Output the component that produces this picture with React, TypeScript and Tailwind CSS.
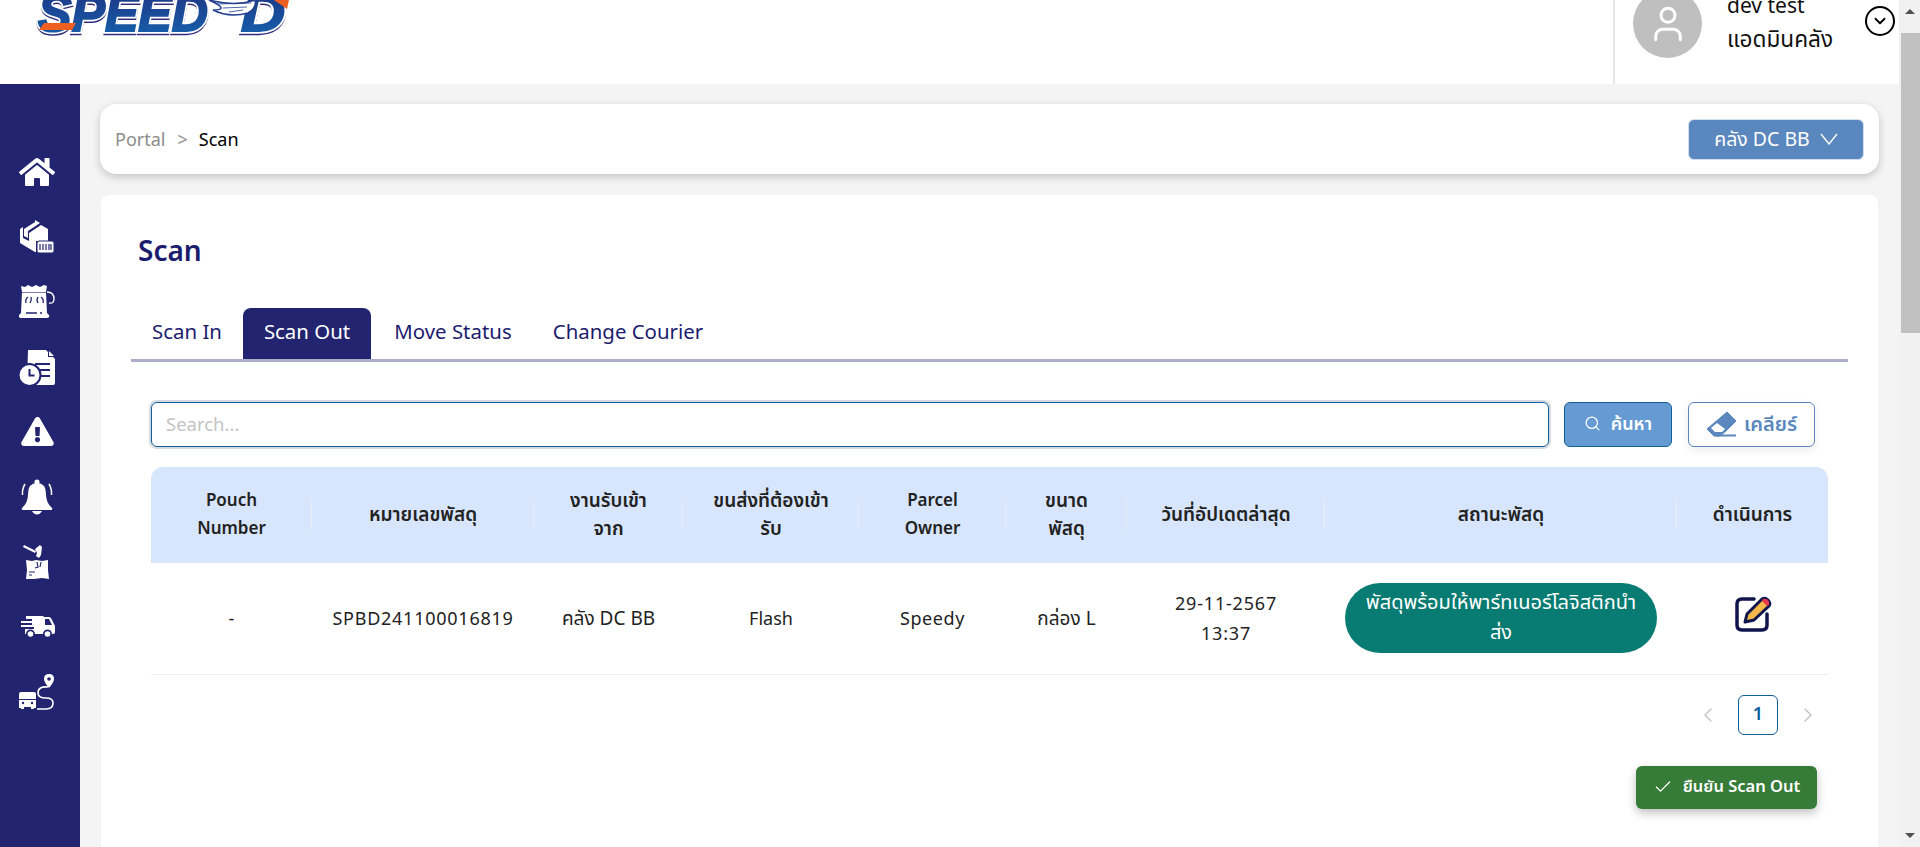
import React from 'react';
import { ChevronDown, ChevronLeft, ChevronRight, Check, Search, User } from 'lucide-react';
import { FaHome, FaExclamationTriangle } from 'react-icons/fa';

const FONT = "font-['Noto_Sans','Noto_Sans_Thai','Noto_Sans_CJK_SC',sans-serif]";

const LogoWord = ({ x, length, children }: { x: number; length: number; children: string }) => (
  <g fontFamily="Liberation Sans" fontWeight="700" fontStyle="italic" fontSize="52">
    <text x={x} y="36" textLength={length} lengthAdjust="spacingAndGlyphs" fill="#2c2a7a" stroke="#2c2a7a" strokeWidth="4.500">{children}</text>
    <text x={x} y="34" textLength={length} lengthAdjust="spacingAndGlyphs" fill="#fff" stroke="#fff" strokeWidth="5.500">{children}</text>
    <text x={x} y="34" textLength={length} lengthAdjust="spacingAndGlyphs" fill="url(#logoBlue)" stroke="url(#logoBlue)" strokeWidth="2">{children}</text>
  </g>
);

const Logo = () => (
  <svg width="262" height="42" viewBox="0 0 262 42" className="mt-[-3px] ml-[31px]">
    <defs>
      <linearGradient id="logoBlue" x1="0" y1="0" x2="0" y2="1">
        <stop offset="0" stopColor="#1f2f7f" />
        <stop offset="1" stopColor="#1565b0" />
      </linearGradient>
    </defs>
    <LogoWord x={7} length={170}>SPEED</LogoWord>
    <path d="M8 33 L13 26 L45 26 L41 33Z" fill="#ee5f22" />
    <LogoWord x={210} length={44}>D</LogoWord>
    <path d="M178 3 Q205 10 224 3 Q226 11 217 16 Q198 21 182 13 Q200 13 178 3Z" fill="#fff" stroke="#24408f" strokeWidth="1.5" />
    <path d="M186 7 L220 6 M192 11 L216 10 M198 15 L212 13" stroke="#24408f" strokeWidth="0.8" fill="none" />
    <path d="M243 3 L258 3 L256 12Z" fill="#ee5f22" />
  </svg>
);

const BoxScanIcon = () => (
  <svg viewBox="0 0 36 34" className="w-[36px] h-[34px]" fill="#fff">
    <path d="M16 0 L21 3 L9 11 L9 18 L5 16 L5 9 L16 2Z" />
    <path d="M1 9 L4 7 L4 18 L10 21 L10 13 L22 5 L29 9 L29 21 L17 21 L17 32 L16 32 L1 23Z" />
    <rect x="18" y="21" width="17" height="12" rx="2" fill="#fff" stroke="#22246f" strokeWidth="1" />
    <path d="M21 24v6M24 24v6M27 24v6M30 24v6M32 24v6" stroke="#22246f" strokeWidth="1.2" />
  </svg>
);

const PouchIcon = () => (
  <svg viewBox="0 0 36 34" className="w-[36px] h-[34px]" fill="#fff">
    <path d="M2 1 L6 2 L9 0 L13 2 L17 0 L21 2 L25 0 L28 1 L27 7 L28 28 L30 30 Q31 33 28 33 L2 33 Q-1 33 0 30 L2 28 L3 7Z" />
    <path d="M3 7.500h24" stroke="#22246f" strokeWidth="0.6" />
    <path d="M9 12 Q6 14 7 18 M12 12 Q13 15 11 18 M19 12 Q17 15 19 18 M22 12 Q25 14 24 18" stroke="#22246f" strokeWidth="1.3" fill="none" />
    <path d="M7 28h11M21 28h2" stroke="#22246f" strokeWidth="1.4" />
    <path d="M28 7 Q35 7 35 14 Q35 19 30 18" fill="none" stroke="#fff" strokeWidth="1.4" />
  </svg>
);

const DocClockIcon = () => (
  <svg viewBox="0 0 36 36" className="w-[36px] h-[36px]" fill="#fff">
    <path d="M9 1 L27 1 L36 10 L36 34 Q36 36 34 36 L9 36 Q8 36 8 35Z" />
    <path d="M29 1 L36 8 L29 8Z" fill="#22246f" />
    <path d="M30 2 L35 7 L30 7Z" fill="#fff" />
    <path d="M16 15h15M20 21h11M20 27h11" stroke="#22246f" strokeWidth="2" />
    <circle cx="10.5" cy="26" r="11" stroke="#22246f" strokeWidth="2" />
    <path d="M10.5 20v6.5h5" fill="none" stroke="#22246f" strokeWidth="2" />
  </svg>
);

const BellIcon = () => (
  <svg viewBox="0 0 32 36" className="w-[32px] h-[36px]" fill="#fff">
    <circle cx="16" cy="3" r="2.6" />
    <path d="M16 4 Q25 4 25 15 Q25 24 31 29 Q32 31 30 31 L2 31 Q0 31 1 29 Q7 24 7 15 Q7 4 16 4Z" />
    <path d="M11 32 L21 32 Q19 35.500 16 35.500 Q13 35.500 11 32Z" />
    <path d="M4 5 Q1 10 1.500 16 M28 5 Q31 10 30.500 16" fill="none" stroke="#fff" strokeWidth="1.5" />
  </svg>
);

const HammerBoxIcon = () => (
  <svg viewBox="0 0 30 36" className="w-[30px] h-[36px]" fill="#fff">
    <path d="M2 1 L14 7 L13 9 L1 3Z" />
    <path d="M13 5 L18 1 L20 3 L19 11 L17 14 L14 12 L15 9Z" />
    <path d="M4 16 L10 17 L14 16 L20 17 L26 16 L26 26 L27 35 L20 34 L12 35 L4 35 L5 26Z" />
    <path d="M15 18l1 5-3 1M19 18l-1 5" fill="none" stroke="#22246f" strokeWidth="1.2" />
    <path d="M7 28h6M7 31h3" stroke="#22246f" strokeWidth="1" />
  </svg>
);

const VanIcon = () => (
  <svg viewBox="0 0 35 21" className="w-[35px] h-[21px]" fill="#fff">
    <path d="M6 0 L23 0 L24 1 L29 1 Q31 1 32 4 L34 8 Q35 9 35 11 L35 16 Q35 18 33 18 L32 18 A4.500 4.500 0 0 0 23 18 L15 18 A4.500 4.500 0 0 0 6 18 L5 18 L5 13 L14 13 L14 11 L1 11 L1 9 L12 9 L12 7 L1 7 L1 5 L12 5 L12 3 L6 3Z" />
    <path d="M25 3 L29 3 L32 9 L25 9Z" fill="#22246f" />
    <circle cx="10.500" cy="18" r="2.800" />
    <circle cx="27.500" cy="18" r="2.800" />
  </svg>
);

const RouteIcon = () => (
  <svg viewBox="0 0 36 36" className="w-[36px] h-[36px]" fill="#fff">
    <path d="M30 0 Q35 0 35 5 Q35 8 30 14 Q25 8 25 5 Q25 0 30 0Z" />
    <circle cx="30" cy="5" r="1.800" fill="#22246f" />
    <path d="M29 13 Q19 12 19 19 Q19 24 27 24 Q34 24 34 29 Q34 35 27 35 L18 35" fill="none" stroke="#fff" strokeWidth="1.6" />
    <path d="M2 18 L15 18 Q17 18 17 20 L17 25 L0 25 L0 20 Q0 18 2 18Z" />
    <path d="M0 26 L17 26 L17 34 L15 34 L15 35 L12 35 L12 33 L5 33 L5 35 L2 35 L2 34 L0 34Z" />
    <circle cx="4" cy="29" r="1.200" fill="#22246f" />
    <circle cx="13" cy="29" r="1.200" fill="#22246f" />
  </svg>
);

const EraserIcon = () => (
  <svg viewBox="0 0 31 27" className="h-[27px] w-[31px]">
    <path d="M21 2 L30 11 L20 21 L14 26 L8 26 L1 19Z" fill="#5a87bd" stroke="#5a87bd" strokeLinejoin="round" />
    <path d="M5 18 L11 13 L19 19 L16 22 L9 22Z" fill="#fff" />
    <path d="M10 25.500 L30 25.500" stroke="#5a87bd" strokeWidth="2" />
  </svg>
);

const EditIcon = () => (
  <svg viewBox="0 0 38 38" className="w-[38px] h-[38px]">
    <path d="M20 3 L8 3 Q3 3 3 8 L3 29 Q3 34 8 34 L28 34 Q33 34 33 29 L33 18" fill="none" stroke="#10144d" strokeWidth="3.5" strokeLinecap="round" />
    <path d="M11 26 L13 18 L28 3 Q31 1 34 4 Q37 7 35 10 L20 24Z" fill="#f6b84a" stroke="#10144d" strokeWidth="3" strokeLinejoin="round" />
    <path d="M29 3 Q31 2 34 4 Q36 6 35 9 L33 10 L28 5Z" fill="#e53950" />
  </svg>
);

const sideItems = [
  <FaHome key="home" className="w-[36px] h-[32px] text-white" />,
  <BoxScanIcon key="box" />,
  <PouchIcon key="pouch" />,
  <DocClockIcon key="doc" />,
  <FaExclamationTriangle key="alert" className="w-[33px] h-[29px] text-white" />,
  <BellIcon key="bell" />,
  <HammerBoxIcon key="hammer" />,
  <VanIcon key="truck" />,
  <RouteIcon key="route" />,
];

const columns = [
  { label: ['Pouch', 'Number'], width: 'w-[161px]', size: 'text-[17px]' },
  { label: ['หมายเลขพัสดุ'], width: 'w-[222px]', size: 'text-[19px]' },
  { label: ['งานรับเข้า', 'จาก'], width: 'w-[149px]', size: 'text-[19px]' },
  { label: ['ขนส่งที่ต้องเข้า', 'รับ'], width: 'w-[176px]', size: 'text-[19px]' },
  { label: ['Parcel', 'Owner'], width: 'w-[147px]', size: 'text-[17px]' },
  { label: ['ขนาด', 'พัสดุ'], width: 'w-[121px]', size: 'text-[19px]' },
  { label: ['วันที่อัปเดตล่าสุด'], width: 'w-[198px]', size: 'text-[19px]' },
  { label: ['สถานะพัสดุ'], width: 'w-[352px]', size: 'text-[19px]' },
  { label: ['ดำเนินการ'], width: 'w-[151px]', size: 'text-[19px]' },
];

export default function App() {
  return (
    <div className={`${FONT} flex h-screen w-screen overflow-hidden bg-[#f4f4f4]`}>
      <div className="flex min-w-0 flex-1 flex-col">
        <header className="flex h-[84px] shrink-0 justify-between overflow-hidden bg-white">
          <Logo />
          <div className="flex w-[286px] border-l-2 border-[#e6e6ea]">
            <div className="mt-[-11px] ml-[18px] flex h-[69px] w-[69px] shrink-0 items-center justify-center rounded-full bg-[#bfbfbf]">
              <User className="h-[42px] w-[42px] text-white" strokeWidth={1.7} />
            </div>
            <div className="mt-[-12px] ml-[25px] w-[138px] text-[21px] leading-[34px] text-[#111]">
              <div>dev test</div>
              <div className="text-[22.6px]">แอดมินคลัง</div>
            </div>
            <div className="mt-[6px] flex h-[30px] w-[30px] shrink-0 items-center justify-center rounded-full border-2 border-black">
              <ChevronDown className="h-[18px] w-[18px] text-black" strokeWidth={2.5} />
            </div>
          </div>
        </header>

        <div className="flex min-h-0 flex-1">
          <aside className="flex w-[80px] shrink-0 flex-col items-center bg-[#22246f] pt-[55px] pr-[6px]">
            {sideItems.map((icon, i) => (
              <div key={i} className="flex h-[65px] shrink-0 items-center justify-center">
                {icon}
              </div>
            ))}
          </aside>

          <main className="min-w-0 flex-1 px-[20px] pt-[20px]">
            <div className="flex h-[70px] items-center justify-between rounded-2xl bg-white pr-[15px] pl-[15px] shadow-[0_3px_8px_rgba(0,0,0,0.2)]">
              <div className="flex items-center text-[18px]">
                <span className="text-[#8c8c8c]">Portal</span>
                <span className="mr-[11px] ml-[12px] text-[#8c8c8c]">&gt;</span>
                <span className="text-black">Scan</span>
              </div>
              <button className="flex h-[41px] w-[176px] items-center justify-center gap-[10px] rounded-md border border-[#d5dfec] bg-[#5a87bd] text-[19.5px] text-white">
                คลัง DC BB
                <svg viewBox="0 0 18 12" className="h-[12px] w-[18px]" fill="none" stroke="#fff" strokeWidth="1.4">
                  <path d="M1 1 L9 11 L17 1" />
                </svg>
              </button>
            </div>

            <section className="mt-[21px] ml-[1px] h-[800px] w-[1777px] rounded-lg bg-white px-[30px] pt-[38px]">
              <h1 className="ml-[7px] text-[28px] leading-[34px] font-semibold text-[#1c1c6e]">Scan</h1>

              <div className="mt-[41px] flex h-[54px] items-end border-b-[3px] border-[#aeaecb] text-[20.4px] text-[#1c1c6e]">
                <div className="flex h-[51px] w-[112px] items-center justify-center pb-[4px]">Scan In</div>
                <div className="flex h-[51px] w-[128px] items-center justify-center rounded-t-lg bg-[#22246f] pb-[4px] text-white">Scan Out</div>
                <div className="flex h-[51px] w-[160px] items-center justify-center pb-[4px] pl-[4px]">Move Status</div>
                <div className="flex h-[51px] w-[192px] items-center justify-center pb-[4px] pl-[2px]">Change Courier</div>
              </div>

              <div className="mx-[20px] mt-[40px] flex items-center">
                <input
                  placeholder="Search..."
                  className="h-[45px] w-[1398px] rounded-md border border-[#0e5f9c] px-[14px] pb-[3px] text-[18.5px] shadow-[0_0_0_2px_#d3d9de] outline-none placeholder:text-[#c4c4c4]"
                />
                <button className="ml-[15px] flex h-[45px] w-[108px] items-center justify-center gap-[10px] rounded-md border border-[#0f5f9b] bg-[#659ad2] pb-[2px] text-[18px] font-semibold text-white">
                  <Search className="h-[17px] w-[17px]" strokeWidth={1.8} />
                  ค้นหา
                </button>
                <button className="ml-[16px] flex h-[45px] w-[127px] items-center justify-center gap-[7px] rounded-md border border-[#5a87bd] bg-white pb-[2px] text-[20px] font-semibold text-[#5a87bd] shadow-[0_3px_8px_rgba(0,0,0,0.08)]">
                  <EraserIcon />
                  เคลียร์
                </button>
              </div>

              <table className="mx-[20px] mt-[20px] w-[1677px] table-fixed border-collapse text-[#222]">
                <thead>
                  <tr className="h-[96px] bg-[#d8e6fd]">
                    {columns.map((col, i) => (
                      <th
                        key={i}
                        className={`${col.width} ${col.size} relative px-2 pb-[3px] font-semibold leading-[28px] first:rounded-tl-xl last:rounded-tr-xl`}
                      >
                        {col.label.map((line) => (
                          <div key={line}>{line}</div>
                        ))}
                        {i < columns.length - 1 && (
                          <span className="absolute top-[33px] right-0 h-[30px] w-px bg-[#e8edf5]" />
                        )}
                      </th>
                    ))}
                  </tr>
                </thead>
                <tbody>
                  <tr className="h-[111px] border-b border-[#eeeeee] text-center text-[18px]">
                    <td>-</td>
                    <td className="tracking-[0.75px]">SPBD241100016819</td>
                    <td className="text-[19px]">คลัง DC BB</td>
                    <td>Flash</td>
                    <td className="tracking-[0.6px]">Speedy</td>
                    <td className="text-[19px]">กล่อง L</td>
                    <td className="leading-[30px] tracking-[0.8px]">
                      29-11-2567
                      <br />
                      13:37
                    </td>
                    <td>
                      <div className="mx-auto flex h-[70px] w-[312px] items-center justify-center rounded-[35px] bg-[#087b72] pb-[3px] text-[20px] leading-[30px] text-white">
                        <span>
                          พัสดุพร้อมให้พาร์ทเนอร์โลจิสติกนำ
                          <br />
                          ส่ง
                        </span>
                      </div>
                    </td>
                    <td>
                      <div className="mb-[6px] flex justify-center">
                        <EditIcon />
                      </div>
                    </td>
                  </tr>
                </tbody>
              </table>

              <div className="mx-[20px] mt-[20px] flex items-center justify-end pr-[8px]">
                <ChevronLeft className="h-[24px] w-[24px] text-[#c4c4c4]" strokeWidth={1.5} />
                <div className="mx-[18px] flex h-[40px] w-[40px] items-center justify-center rounded-md border border-[#0e5f9c] pb-[3px] text-[18px] font-semibold text-[#0e5f9c]">
                  1
                </div>
                <ChevronRight className="h-[24px] w-[24px] text-[#c4c4c4]" strokeWidth={1.5} />
              </div>

              <div className="mx-[20px] mt-[31px] flex justify-end pr-[11px]">
                <button className="flex h-[43px] w-[181px] items-center justify-center gap-[10px] rounded-md bg-[#367b38] text-[16.5px] font-semibold text-white shadow-[0_4px_10px_rgba(0,0,0,0.25)]">
                  <Check className="h-[20px] w-[20px]" strokeWidth={1.5} />
                  <span className="pb-[1px]">ยืนยัน Scan Out</span>
                </button>
              </div>
            </section>
          </main>
        </div>
      </div>

      <div className="flex w-[21px] shrink-0 flex-col items-center justify-between bg-[#f1f1f1]">
        <div className="flex w-full flex-col items-center">
          <div className="mt-[9px] h-0 w-0 border-r-[5px] border-b-[5px] border-l-[5px] border-r-transparent border-b-[#505050] border-l-transparent" />
          <div className="mt-[19px] ml-[2px] h-[300px] w-[19px] bg-[#c1c1c1]" />
        </div>
        <div className="mb-[9px] h-0 w-0 border-t-[5px] border-r-[5px] border-l-[5px] border-t-[#505050] border-r-transparent border-l-transparent" />
      </div>
    </div>
  );
}
